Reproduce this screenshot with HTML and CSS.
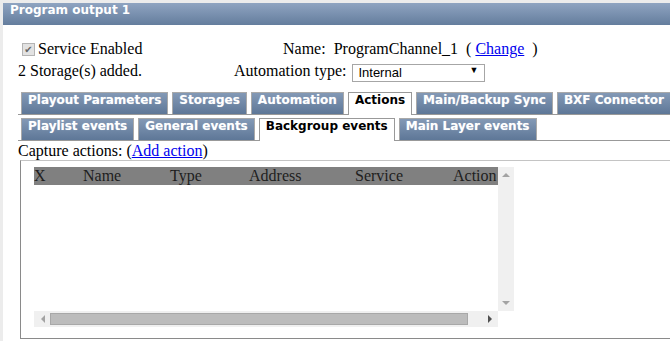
FILE: index.html
```html
<!DOCTYPE html>
<html lang="en">
<head>
    <meta charset="UTF-8">
    <title>Program output 1</title>
    <link rel="stylesheet" href="styles.css">
</head>
<body>

    <div class="panel">
        <div class="panel-title">Program output 1</div>

        <div class="panel-body">
            <div class="settings">
                <label class="check"><span class="checkbox">&#10004;</span>Service Enabled</label>
                <div class="name-line">Name:&nbsp; ProgramChannel_1&nbsp; (&nbsp;<a href="#">Change</a>&nbsp; )</div>
                <div class="storages">2 Storage(s) added.</div>
                <div class="auto-line">Automation type:&nbsp; <span class="select">Internal<span class="select-arrow">&#9660;</span></span></div>
            </div>

            <ul class="tabs">
                <li>Playout Parameters</li>
                <li>Storages</li>
                <li>Automation</li>
                <li class="active">Actions</li>
                <li>Main/Backup Sync</li>
                <li>BXF Connector</li>
            </ul>
            <ul class="tabs sub-tabs">
                <li>Playlist events</li>
                <li>General events</li>
                <li class="active">Backgroup events</li>
                <li>Main Layer events</li>
            </ul>

            <div class="capture">Capture actions: (<a href="#">Add action</a>)</div>

            <div class="actions-box">
                <div class="scroller">
                    <div class="viewport">
                        <div class="grid-head">
                            <span>X</span>
                            <span>Name</span>
                            <span>Type</span>
                            <span>Address</span>
                            <span>Service</span>
                            <span>Action</span>
                        </div>
                    </div>
                    <div class="vbar">
                        <span class="arrow up"></span>
                        <span class="arrow down"></span>
                    </div>
                    <div class="hbar">
                        <span class="arrow left"></span>
                        <span class="thumb"></span>
                        <span class="arrow right"></span>
                    </div>
                    <div class="corner"></div>
                </div>
            </div>
        </div>
    </div>

</body>
</html>
```

FILE: styles.css
```css
body {
    margin: 0;
    padding: 3px 0 0 3px;
    background-color: #ececec;
    font-family: "Liberation Serif", "Times New Roman", serif;
    font-size: 16px;
    color: #000;
    overflow: hidden;
}
a {
    color: #0000ee;
}
.panel {
    width: 720px;
    background: white;
}
.panel-title {
    height: 22px;
    line-height: 23px;
    padding-left: 7px;
    background: linear-gradient(#8fa4c1, #647d9d);
    color: white;
    font: bold 12px "DejaVu Sans", Verdana, sans-serif;
}
.panel-body {
    padding: 15px 0 2px 15px;
}
.settings {
    display: grid;
    grid-template-columns: 216px auto;
    row-gap: 4px;
    line-height: 18px;
    margin-bottom: 12px;
}
.check {
    display: flex;
    align-items: center;
}
.checkbox {
    width: 11px;
    height: 11px;
    margin: 0 3px 0 4px;
    border: 1px solid #b4b4b4;
    background: #e2e2e2;
    color: #666;
    font: 10px/11px "DejaVu Sans", sans-serif;
    text-align: center;
}
.name-line {
    padding-left: 49px;
}
.auto-line {
    display: flex;
    align-items: flex-start;
}
.select {
    position: relative;
    width: 126px;
    height: 16px;
    line-height: 16px;
    margin: 2px 0 -2px 2px;
    padding-left: 5px;
    border: 1px solid #a6a6a6;
    font: 13px "Liberation Sans", Arial, sans-serif;
}
.select-arrow {
    position: absolute;
    right: 6px;
    top: 0;
    font-size: 9px;
}
.tabs {
    display: flex;
    gap: 4px;
    list-style: none;
    margin: 0;
    padding: 0 0 0 3px;
    border-bottom: 1px solid #999;
    white-space: nowrap;
}
.tabs li {
    height: 21px;
    line-height: 22px;
    padding: 0 6px;
    border: 1px solid #a9a9a9;
    border-bottom: none;
    background: linear-gradient(#8399b6, #5e7797);
    color: white;
    font: bold 12px "DejaVu Sans", Verdana, sans-serif;
    text-shadow: 0 0 1px rgba(255,255,255,0.4);
}
.tabs li.active {
    background: white;
    color: black;
    text-shadow: none;
    border-color: #999;
    margin-bottom: -1px;
    height: 22px;
}
.sub-tabs {
    margin-top: 3px;
}
.capture {
    line-height: 18px;
    margin-top: 1px;
}
.actions-box {
    margin-left: 2px;
    padding: 6px 0 11px 13px;
    border: 1px solid #8a8a8a;
    border-top-color: #c4c4c4;
}
.scroller {
    display: grid;
    grid-template-columns: 464px 16px;
    grid-template-rows: 144px 16px;
}
.viewport {
    overflow: hidden;
}
.grid-head {
    display: grid;
    grid-template-columns: 49px 87px 79px 106px 98px 70px;
    width: 520px;
    height: 18px;
    line-height: 18px;
    background: #808080;
    color: #1e1e1e;
}
.vbar, .hbar {
    background: #f0f0f0;
    display: flex;
    align-items: center;
    justify-content: space-between;
}
.vbar {
    flex-direction: column;
    padding: 6px 0;
}
.hbar {
    padding: 0 6px 0 7px;
}
.arrow {
    width: 0;
    height: 0;
}
.up {
    border: 4px solid transparent;
    border-top: none;
    border-bottom: 4px solid #a3a3a3;
}
.down {
    border: 4px solid transparent;
    border-bottom: none;
    border-top: 4px solid #a3a3a3;
}
.left {
    border: 4px solid transparent;
    border-left: none;
    border-right: 4px solid #a3a3a3;
}
.right {
    border: 4px solid transparent;
    border-right: none;
    border-left: 4px solid #505050;
}
.thumb {
    width: 416px;
    height: 10px;
    margin-right: auto;
    margin-left: 5px;
    background: #bcbcbc;
    border: 1px solid #a8a8a8;
}
.corner {
    background: white;
}
```
